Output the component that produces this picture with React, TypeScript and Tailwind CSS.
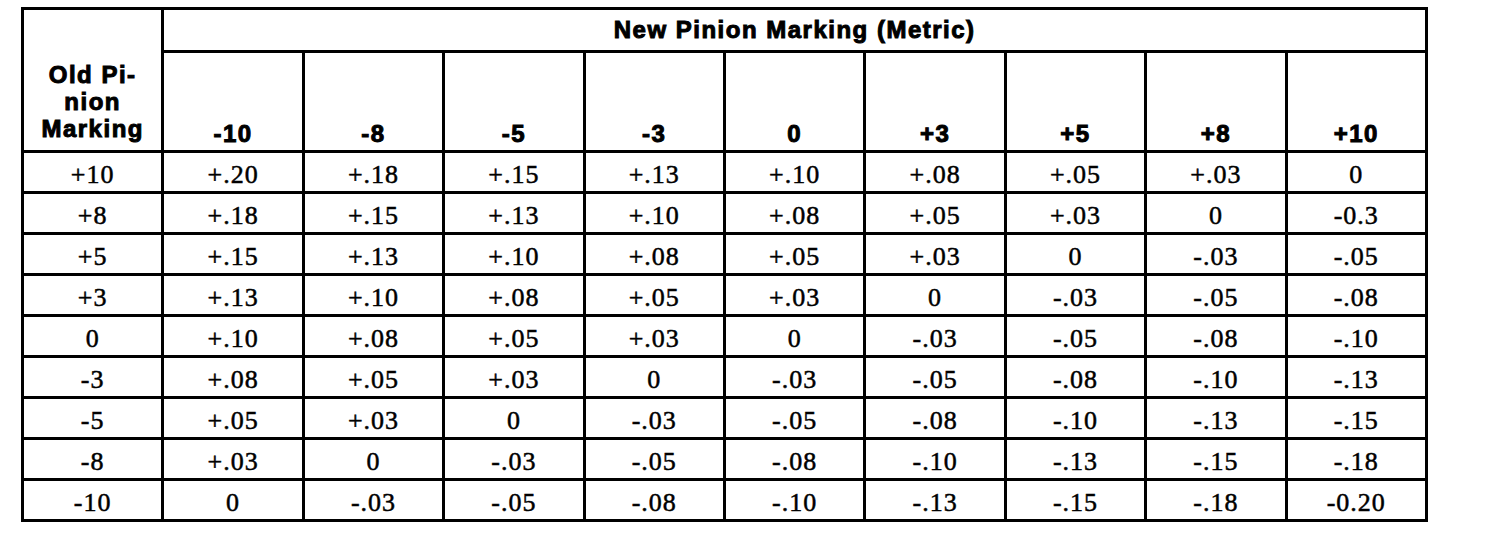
const newMarks = ["-10", "-8", "-5", "-3", "0", "+3", "+5", "+8", "+10"];

const rows: { old: string; values: string[] }[] = [
  { old: "+10", values: ["+.20", "+.18", "+.15", "+.13", "+.10", "+.08", "+.05", "+.03", "0"] },
  { old: "+8", values: ["+.18", "+.15", "+.13", "+.10", "+.08", "+.05", "+.03", "0", "-0.3"] },
  { old: "+5", values: ["+.15", "+.13", "+.10", "+.08", "+.05", "+.03", "0", "-.03", "-.05"] },
  { old: "+3", values: ["+.13", "+.10", "+.08", "+.05", "+.03", "0", "-.03", "-.05", "-.08"] },
  { old: "0", values: ["+.10", "+.08", "+.05", "+.03", "0", "-.03", "-.05", "-.08", "-.10"] },
  { old: "-3", values: ["+.08", "+.05", "+.03", "0", "-.03", "-.05", "-.08", "-.10", "-.13"] },
  { old: "-5", values: ["+.05", "+.03", "0", "-.03", "-.05", "-.08", "-.10", "-.13", "-.15"] },
  { old: "-8", values: ["+.03", "0", "-.03", "-.05", "-.08", "-.10", "-.13", "-.15", "-.18"] },
  { old: "-10", values: ["0", "-.03", "-.05", "-.08", "-.10", "-.13", "-.15", "-.18", "-0.20"] },
];

const head =
  "font-['Liberation_Sans',Arial,sans-serif] font-bold text-[24px] tracking-[1.5px] text-black [-webkit-text-stroke:1px_black]";
const cell =
  "h-[41px] border-r-[3px] border-b-[3px] border-black flex items-center justify-center pt-[6px] font-['Liberation_Serif',serif] text-[26px] leading-[30px] tracking-[1px] text-black [-webkit-text-stroke:0.5px_black]";

export default function App() {
  return (
    <div className="w-[1504px] h-[548px] bg-white overflow-hidden pt-[7px] pl-[21px]">
      <div className="w-[1407px] grid grid-cols-10 border-t-[3px] border-l-[3px] border-black">
        {/* Old marking header spans both header rows */}
        <div
          className={`row-span-2 border-r-[3px] border-b-[3px] border-black flex items-end justify-center pb-[8px] text-center leading-[27px] ${head}`}
        >
          Old Pi-
          <br />
          nion
          <br />
          Marking
        </div>
        <div
          className={`col-span-9 h-[43px] border-r-[3px] border-b-[3px] border-black flex items-center justify-center ${head}`}
        >
          New Pinion Marking (Metric)
        </div>
        {newMarks.map((m) => (
          <div
            key={m}
            className={`h-[100px] border-r-[3px] border-b-[3px] border-black flex items-end justify-center pb-[4px] leading-[25px] ${head}`}
          >
            {m}
          </div>
        ))}

        {rows.map((r) => (
          <div key={r.old} className="contents">
            <div className={cell}>{r.old}</div>
            {r.values.map((v, i) => (
              <div key={i} className={cell}>
                {v}
              </div>
            ))}
          </div>
        ))}
      </div>
    </div>
  );
}
